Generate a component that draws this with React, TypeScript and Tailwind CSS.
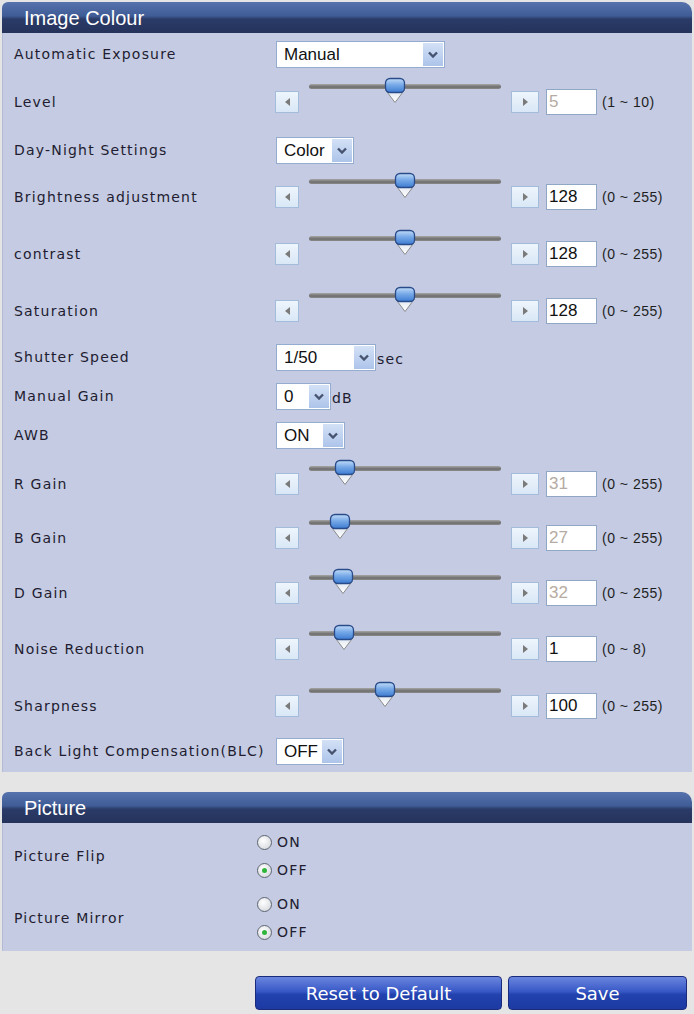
import React from "react";

const LABEL =
  "font-['DejaVu_Sans',sans-serif] text-[14px] tracking-[1.2px] text-[#221c30] whitespace-nowrap";
const VALUE = "font-['Liberation_Sans',Arial,sans-serif] text-[17px]";

type SelectRow = {
  kind: "select";
  label: string;
  value: string;
  width: number;
  suffix?: string;
  mt: string;
};

type SliderRow = {
  kind: "slider";
  label: string;
  pos: number;
  value: string;
  range: string;
  disabled?: boolean;
  mt: string;
};

type Row = SelectRow | SliderRow;

const rows: Row[] = [
  { kind: "select", label: "Automatic Exposure", value: "Manual", width: 169, mt: "mt-[7px]" },
  { kind: "slider", label: "Level", pos: 86, value: "5", range: "(1 ~ 10)", disabled: true, mt: "mt-[16px]" },
  { kind: "select", label: "Day-Night Settings", value: "Color", width: 78, mt: "mt-[22px]" },
  { kind: "slider", label: "Brightness adjustment", pos: 96, value: "128", range: "(0 ~ 255)", mt: "mt-[15px]" },
  { kind: "slider", label: "contrast", pos: 96, value: "128", range: "(0 ~ 255)", mt: "mt-[26px]" },
  { kind: "slider", label: "Saturation", pos: 96, value: "128", range: "(0 ~ 255)", mt: "mt-[26px]" },
  { kind: "select", label: "Shutter Speed", value: "1/50", width: 100, suffix: "sec", mt: "mt-[20px]" },
  { kind: "select", label: "Manual Gain", value: "0", width: 55, suffix: "dB", mt: "mt-[12px]" },
  { kind: "select", label: "AWB", value: "ON", width: 69, mt: "mt-[12px]" },
  { kind: "slider", label: "R Gain", pos: 36, value: "31", range: "(0 ~ 255)", disabled: true, mt: "mt-[17px]" },
  { kind: "slider", label: "B Gain", pos: 31, value: "27", range: "(0 ~ 255)", disabled: true, mt: "mt-[23px]" },
  { kind: "slider", label: "D Gain", pos: 34, value: "32", range: "(0 ~ 255)", disabled: true, mt: "mt-[24px]" },
  { kind: "slider", label: "Noise Reduction", pos: 35, value: "1", range: "(0 ~ 8)", mt: "mt-[25px]" },
  { kind: "slider", label: "Sharpness", pos: 76, value: "100", range: "(0 ~ 255)", mt: "mt-[26px]" },
  { kind: "select", label: "Back Light Compensation(BLC)", value: "OFF", width: 68, mt: "mt-[19px]" },
];

function Header({ title }: { title: string }) {
  return (
    <div className="flex h-[31px] items-center rounded-tl-[6px] rounded-tr-[10px] bg-[linear-gradient(to_bottom,#5773ad_0%,#3f5c96_45%,#2b3b68_55%,#25335b_100%)] pl-[22px] font-['Liberation_Sans',Arial,sans-serif] text-[20px] text-white">
      {title}
    </div>
  );
}

function Chevron() {
  return (
    <svg width="10" height="7" viewBox="0 0 10 7">
      <polyline points="1,1.5 5,5.5 9,1.5" fill="none" stroke="#46536f" strokeWidth="2.4" />
    </svg>
  );
}

function FakeSelect({ value, width }: { value: string; width: number }) {
  return (
    <div
      className="flex h-[27px] items-stretch border border-[#93acd0] bg-white p-[1px]"
      style={{ width }}
    >
      <span className={`flex flex-1 items-center pl-[6px] text-[#111] ${VALUE}`}>{value}</span>
      <span className="flex w-[20px] items-center justify-center bg-gradient-to-b from-[#d3e1f6] to-[#adc4ea]">
        <Chevron />
      </span>
    </div>
  );
}

function ArrowBtn({ dir, width }: { dir: "left" | "right"; width: number }) {
  return (
    <div
      className="flex h-[22px] items-center justify-center border border-[#a3bcdb] bg-gradient-to-b from-[#eef5fc] to-[#d9e7f6]"
      style={{ width }}
    >
      <svg width="5" height="8" viewBox="0 0 5 8">
        {dir === "left" ? (
          <polygon points="5,0 0,4 5,8" fill="#7a7a7a" />
        ) : (
          <polygon points="0,0 5,4 0,8" fill="#7a7a7a" />
        )}
      </svg>
    </div>
  );
}

function Thumb({ left }: { left: number }) {
  return (
    <svg
      className="absolute top-[-7px]"
      style={{ left: left - 11 }}
      width="22"
      height="27"
      viewBox="0 0 22 27"
    >
      <defs>
        <linearGradient id="thHi" x1="0" y1="0" x2="0" y2="1">
          <stop offset="0" stopColor="#c2dcf8" />
          <stop offset="0.45" stopColor="#78aae8" />
          <stop offset="1" stopColor="#3d7cd2" />
        </linearGradient>
        <linearGradient id="thLo" x1="0" y1="0" x2="0" y2="1">
          <stop offset="0" stopColor="#dfe6ef" />
          <stop offset="1" stopColor="#ffffff" />
        </linearGradient>
      </defs>
      <path d="M1.5 13 L11 25.5 L20.5 13 Z" fill="url(#thLo)" stroke="#8a8a8a" strokeWidth="1" />
      <rect x="1.5" y="1.5" width="19" height="14" rx="4.5" fill="url(#thHi)" stroke="#2a4b8a" strokeWidth="1.3" />
    </svg>
  );
}

function Slider({ row }: { row: SliderRow }) {
  return (
    <div className="flex flex-col">
      <div className="relative ml-[34px] h-[5px] w-[192px] rounded-full bg-[linear-gradient(to_bottom,#a6a6a6,#6d6d6d_60%,#8c8c8c)]">
        <Thumb left={row.pos} />
      </div>
      <div className="flex h-[26px] items-center">
        <ArrowBtn dir="left" width={24} />
        <div className="w-[212px]" />
        <ArrowBtn dir="right" width={28} />
        <div
          className={`ml-[7px] flex h-[26px] w-[51px] items-center border border-[#8fa6c4] bg-white pl-[2px] ${VALUE} ${
            row.disabled ? "text-[#b5aba2]" : "text-[#111]"
          }`}
        >
          {row.value}
        </div>
        <span className="ml-[5px] font-['Liberation_Sans',Arial,sans-serif] text-[14px] tracking-[0.5px] text-[#1e1e1e]">
          {row.range}
        </span>
      </div>
    </div>
  );
}

function Radio({ checked, label }: { checked: boolean; label: string }) {
  return (
    <div className="flex h-[28px] items-center">
      <div className="flex h-[15px] w-[15px] items-center justify-center rounded-full border border-[#5f6672] bg-[radial-gradient(circle_at_40%_35%,#ffffff,#cfd2d8)]">
        {checked && <div className="h-[5px] w-[5px] rounded-full bg-[#2fb53a]" />}
      </div>
      <span className={`ml-[5px] ${LABEL}`}>{label}</span>
    </div>
  );
}

export default function App() {
  return (
    <div className="min-h-[1014px] bg-[#e5e5e5] px-[2px] pt-[2px]">
      <Header title="Image Colour" />
      <div className="border-l border-[#b3bbd4] bg-[#c4cbe3] pb-[7px] pl-[11px] pt-px">
        {rows.map((row) =>
          row.kind === "select" ? (
            <div key={row.label} className={`flex items-center ${row.mt}`}>
              <div className={`w-[262px] shrink-0 ${LABEL}`}>{row.label}</div>
              <div className="flex items-end">
                <FakeSelect value={row.value} width={row.width} />
                {row.suffix && <span className={`ml-[1px] mb-[1px] ${LABEL}`}>{row.suffix}</span>}
              </div>
            </div>
          ) : (
            <div key={row.label} className={`flex items-end ${row.mt}`}>
              <div className={`flex h-[26px] w-[261px] shrink-0 items-center ${LABEL}`}>{row.label}</div>
              <Slider row={row} />
            </div>
          )
        )}
      </div>

      <div className="mt-[20px]">
        <Header title="Picture" />
        <div className="border-l border-[#b3bbd4] bg-[#c4cbe3] py-[5px] pl-[11px]">
          <div className="flex items-center">
            <div className={`w-[243px] shrink-0 ${LABEL}`}>Picture Flip</div>
            <div className="flex flex-col">
              <Radio checked={false} label="ON" />
              <Radio checked label="OFF" />
            </div>
          </div>
          <div className="mt-[6px] flex items-center">
            <div className={`w-[243px] shrink-0 ${LABEL}`}>Picture Mirror</div>
            <div className="flex flex-col">
              <Radio checked={false} label="ON" />
              <Radio checked label="OFF" />
            </div>
          </div>
        </div>
      </div>

      <div className="mt-[25px] flex justify-end gap-[6px] pr-[5px]">
        <button className="h-[34px] w-[247px] rounded-[4px] border border-[#1a2a7c] bg-[linear-gradient(to_bottom,#6a86de_0%,#3858c6_45%,#2242ae_55%,#1d3aa2_100%)] font-['DejaVu_Sans',sans-serif] text-[18px] text-white">
          Reset to Default
        </button>
        <button className="h-[34px] w-[179px] rounded-[4px] border border-[#1a2a7c] bg-[linear-gradient(to_bottom,#6a86de_0%,#3858c6_45%,#2242ae_55%,#1d3aa2_100%)] font-['DejaVu_Sans',sans-serif] text-[18px] text-white">
          Save
        </button>
      </div>
    </div>
  );
}
